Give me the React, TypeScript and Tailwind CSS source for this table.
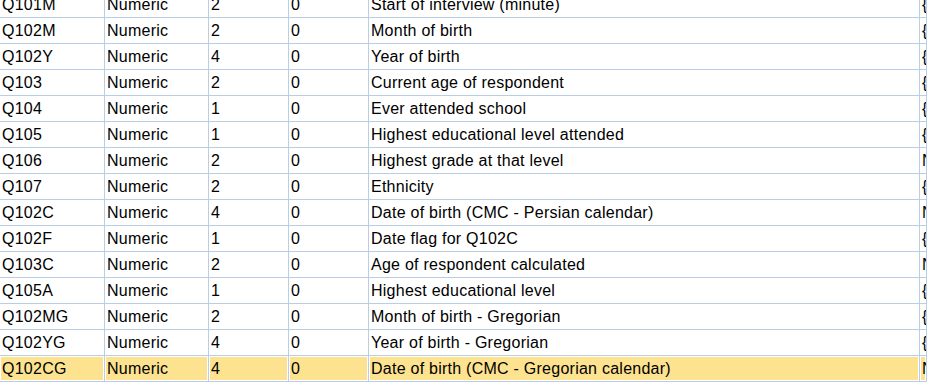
import React from "react";

const rows: [string, string, string, string, string, string][] = [
  ["Q101M", "Numeric", "2", "0", "Start of interview (minute)", "{"],
  ["Q102M", "Numeric", "2", "0", "Month of birth", "{"],
  ["Q102Y", "Numeric", "4", "0", "Year of birth", "{"],
  ["Q103", "Numeric", "2", "0", "Current age of respondent", "{"],
  ["Q104", "Numeric", "1", "0", "Ever attended school", "{"],
  ["Q105", "Numeric", "1", "0", "Highest educational level attended", "{"],
  ["Q106", "Numeric", "2", "0", "Highest grade at that level", "N"],
  ["Q107", "Numeric", "2", "0", "Ethnicity", "{"],
  ["Q102C", "Numeric", "4", "0", "Date of birth (CMC - Persian calendar)", "N"],
  ["Q102F", "Numeric", "1", "0", "Date flag for Q102C", "{"],
  ["Q103C", "Numeric", "2", "0", "Age of respondent calculated", "N"],
  ["Q105A", "Numeric", "1", "0", "Highest educational level", "{"],
  ["Q102MG", "Numeric", "2", "0", "Month of birth - Gregorian", "{"],
  ["Q102YG", "Numeric", "4", "0", "Year of birth - Gregorian", "{"],
  ["Q102CG", "Numeric", "4", "0", "Date of birth (CMC - Gregorian calendar)", "N"],
];

export default function App() {
  return (
    <div
      className="w-[927px] h-[385px] overflow-hidden bg-white text-[16px] tracking-[0.25px] text-black"
      style={{ fontFamily: '"Liberation Sans", Arial, sans-serif' }}
    >
      <div className="-mt-[8px] grid grid-cols-[105px_104px_80px_80px_551px_1fr]">
        {rows.map((r, i) => {
          const hl = i === rows.length - 1;
          return r.map((c, j) => (
            <div
              key={`${i}-${j}`}
              className={`h-[26px] border-b border-r border-[#b9cde5] ${hl ? "p-px" : ""} overflow-hidden`}
            >
              <div
                className={`h-full flex items-center whitespace-nowrap ${hl ? "bg-[#fde38f] pl-[1px]" : "pl-[2px]"}`}
              >
                {c}
              </div>
            </div>
          ));
        })}
      </div>
    </div>
  );
}
